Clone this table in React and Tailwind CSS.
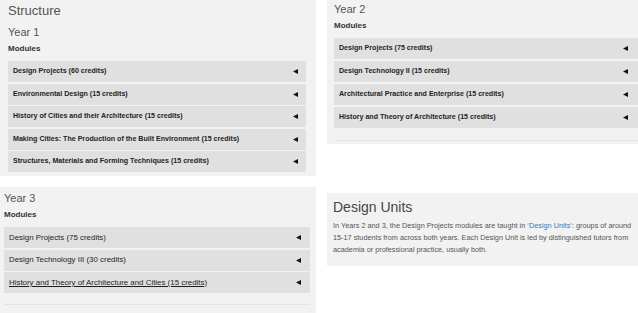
import React from 'react';

const font = { fontFamily: '"Liberation Sans", Arial, sans-serif' };

const year1 = [
  'Design Projects (60 credits)',
  'Environmental Design (15 credits)',
  'History of Cities and their Architecture (15 credits)',
  'Making Cities: The Production of the Built Environment (15 credits)',
  'Structures, Materials and Forming Techniques (15 credits)',
];

const year2 = [
  'Design Projects (75 credits)',
  'Design Technology II (15 credits)',
  'Architectural Practice and Enterprise (15 credits)',
  'History and Theory of Architecture (15 credits)',
];

const year3 = [
  'Design Projects (75 credits)',
  'Design Technology III (30 credits)',
  'History and Theory of Architecture and Cities (15 credits)',
];

// small left-pointing arrow used as the accordion toggle
function Arrow() {
  return (
    <svg width="5" height="5" viewBox="0 0 5 5" className="shrink-0">
      <path d="M0 2.5 L5 0 L5 5 Z" fill="#111" />
    </svg>
  );
}

function ModuleRow({ title, bold = true, underline = false, arrowPad = 'pr-[8px]' }) {
  return (
    <div
      className={`flex h-[21px] items-center justify-between bg-[#e0e0e0] pl-[5px] ${arrowPad}`}
    >
      <span
        className={`text-[#1e1e1e] ${bold ? 'text-[7.1px] font-bold' : 'text-[7.9px] font-normal'} ${
          underline ? 'underline' : ''
        }`}
      >
        {title}
      </span>
      <Arrow />
    </div>
  );
}

export default function App() {
  return (
    <div className="flex h-[313px] w-[638px] gap-[11px] overflow-hidden bg-white" style={font}>
      {/* left column: year 1 and year 3 */}
      <div className="flex w-[316px] flex-col gap-[11px]">
        <section className="h-[176px] bg-[#f2f2f2] pl-[8px] pr-[10px] pt-[3px]">
          <h2 className="text-[13px] leading-[16px] text-[#555]">Structure</h2>
          <h3 className="mt-[7px] text-[11px] leading-[13px] text-[#555]">Year 1</h3>
          <p className="mt-[5px] text-[8px] font-bold leading-[10px] text-[#333]">Modules</p>
          <div className="mt-[7px] flex flex-col gap-[1.5px]">
            {year1.map((m) => (
              <ModuleRow key={m} title={m} />
            ))}
          </div>
        </section>

        <section className="flex-1 bg-[#f2f2f2] pl-[4px] pr-[6px] pt-[5px]">
          <h3 className="text-[11px] leading-[13px] text-[#555]">Year 3</h3>
          <p className="mt-[5px] text-[8px] font-bold leading-[10px] text-[#333]">Modules</p>
          <div className="mt-[7px] flex flex-col gap-[1.5px]">
            {year3.map((m, i) => (
              <ModuleRow key={m} title={m} bold={false} underline={i === 2} arrowPad="pr-[9px]" />
            ))}
          </div>
          <div className="mt-[11px] border-t border-[#e4e4e4]" />
        </section>
      </div>

      {/* right column: year 2 and design units */}
      <div className="flex flex-1 flex-col">
        <section className="h-[144px] bg-[#f2f2f2] pl-[7px] pt-[3px]">
          <h3 className="text-[11px] leading-[13px] text-[#555]">Year 2</h3>
          <p className="mt-[5px] text-[8px] font-bold leading-[10px] text-[#333]">Modules</p>
          <div className="mt-[7px] flex flex-col gap-[2px]">
            {year2.map((m) => (
              <ModuleRow key={m} title={m} arrowPad="pr-[10px]" />
            ))}
          </div>
          <div className="mt-[12px] border-t border-[#e6e6e6]" />
        </section>

        <section className="mt-[49px] h-[73px] bg-[#f2f2f2] pl-[6px] pr-[3px] pt-[6px]">
          <h2 className="text-[14px] leading-[17px] text-[#444]">Design Units</h2>
          <p className="mt-[4px] text-[7.3px] leading-[12px] text-[#555]">
            In Years 2 and 3, the Design Projects modules are taught in{' '}
            <span className="text-[#2f7bbf]">‘Design Units’</span>: groups of around 15-17
            students from across both years. Each Design Unit is led by distinguished tutors from
            academia or professional practice, usually both.
          </p>
        </section>
      </div>
    </div>
  );
}
